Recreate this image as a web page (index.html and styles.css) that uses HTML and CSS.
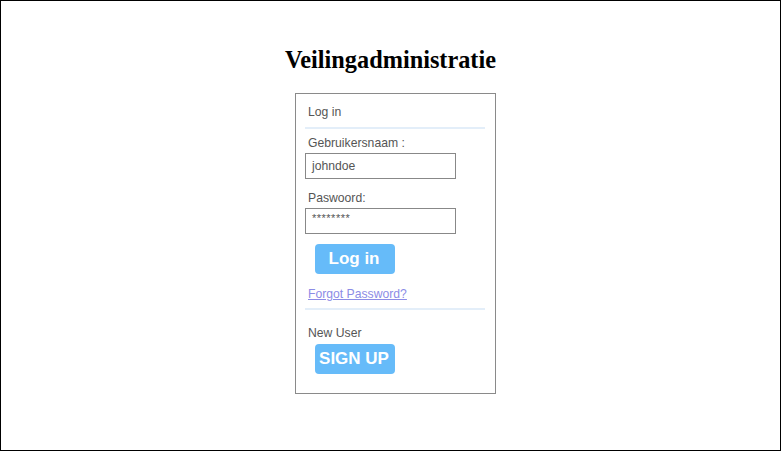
FILE: index.html
```html
<!DOCTYPE html>
<html>
<head>
<meta charset="utf-8">
<link rel="stylesheet" href="styles.css">
</head>
<body>
<div class="frame">
  <h1 class="title">Veilingadministratie</h1>
  <div class="card">
    <div class="card-head">Log in</div>
    <hr class="sep">
    <label class="label">Gebruikersnaam :</label>
    <div class="input">johndoe</div>
    <label class="label">Paswoord:</label>
    <div class="input pw">********</div>
    <button class="btn">Log in</button>
    <a class="link" href="#">Forgot Password?</a>
    <hr class="sep">
    <div class="label newuser">New User</div>
    <button class="btn">SIGN UP</button>
  </div>
</div>
</body>
</html>
```
FILE: styles.css
```css
html, body { margin: 0; padding: 0; background: #fff; }
.frame {
  width: 779px;
  height: 449px;
  border: 1px solid #000;
  display: flex;
  flex-direction: column;
  align-items: center;
}
.title {
  font-family: "Liberation Serif", serif;
  font-weight: bold;
  font-size: 24.3px;
  margin: 44px 0 0 0;
  line-height: 30px;
  color: #000;
}
.card {
  margin: 18px 0 0 10px;
  width: 181px;
  height: 289px;
  border: 1px solid #8a8a8a;
  padding: 10px 9px 0 9px;
  display: flex;
  flex-direction: column;
  align-items: flex-start;
  font-family: "Liberation Sans", Arial, sans-serif;
  font-size: 12.2px;
  color: #555;
}
.card-head { padding-left: 3px; line-height: 16px; }
.sep {
  width: 180px;
  margin: 7px 0 0 0;
  border: 0;
  height: 2px;
  background: #e3eef9;
}
.label { padding-left: 3px; line-height: 16px; margin-top: 6px; }
.input {
  box-sizing: border-box;
  width: 151px;
  height: 26px;
  border: 1px solid #888;
  margin-top: 2px;
  padding-left: 6px;
  line-height: 24px;
  font-size: 12.2px;
  color: #555;
}
.input + .label { margin-top: 11px; }
.pw { letter-spacing: 0.5px; font-size: 11px; line-height: 18px; }
.btn {
  margin: 10px 0 0 10px;
  width: 80px;
  height: 30px;
  border: 0;
  border-radius: 4px;
  background: #66bbf9;
  color: #fff;
  font-family: "Liberation Sans", Arial, sans-serif;
  font-weight: bold;
  font-size: 17px;
  padding: 0 2px 0 0;
}
.link {
  margin-top: 12px;
  padding-left: 3px;
  color: #8c8ce6;
  line-height: 16px;
}
.link + .sep { margin-top: 6px; }
.newuser { margin-top: 15px; }
.newuser + .btn { margin-top: 3px; }
```
